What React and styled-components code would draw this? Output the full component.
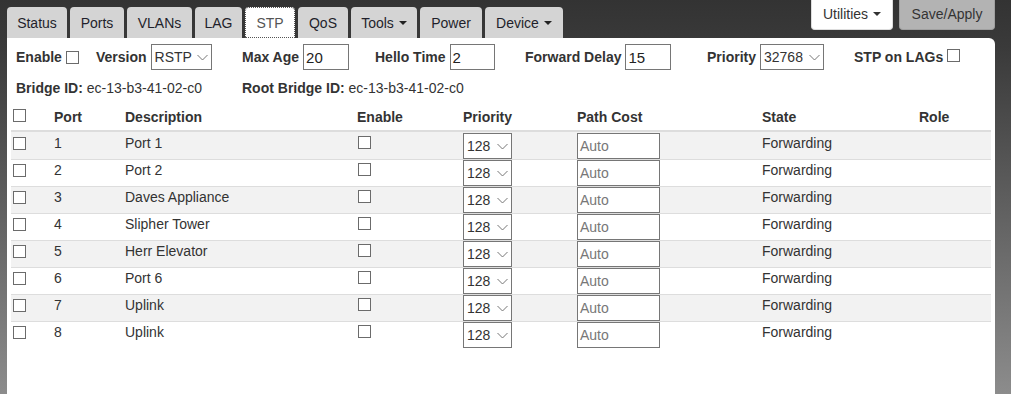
import React from "react";
import styled, { createGlobalStyle } from "styled-components";

const Global = createGlobalStyle`
  html, body { margin: 0; padding: 0; }
  body {
    min-height: 394px;
    background: linear-gradient(#333333 0%, #3a3a3a 12%, #8c8c8c 100%);
    font-family: "Liberation Sans", Arial, sans-serif;
    font-size: 14px;
    color: #333;
  }
`;

const Page = styled.div`
  display: flex;
  flex-direction: column;
  min-height: 394px;
  padding: 0 16px 0 7px;
  box-sizing: border-box;
`;

const TopBar = styled.div`
  display: flex;
  justify-content: space-between;
  align-items: flex-start;
  height: 38px;
`;

const Tabs = styled.div`
  display: flex;
  gap: 3px;
  margin-top: 7px;
`;

const Tab = styled.div`
  width: ${(p) => p.$w}px;
  height: 31px;
  box-sizing: border-box;
  display: flex;
  align-items: center;
  justify-content: center;
  gap: 5px;
  border-radius: 4px 4px 0 0;
  background: ${(p) => (p.$active ? "#fff" : "#d4d4d4")};
  color: ${(p) => (p.$active ? "#555" : "#1f1f2b")};
  outline: ${(p) => (p.$active ? "1px dotted #555" : "none")};
  outline-offset: -1px;
  line-height: 16px;
`;

const Caret = styled.span`
  display: inline-block;
  width: 0;
  height: 0;
  border-left: 4px solid transparent;
  border-right: 4px solid transparent;
  border-top: 4px solid ${(p) => p.$color || "#222"};
  margin-top: 1px;
`;

const Actions = styled.div`
  display: flex;
  gap: 6px;
`;

const ActionButton = styled.div`
  height: 30px;
  box-sizing: border-box;
  display: flex;
  align-items: center;
  justify-content: center;
  gap: 5px;
  width: ${(p) => p.$w}px;
  border-radius: 0 0 4px 4px;
  background: ${(p) => (p.$primary ? "#b3b3b3" : "#fff")};
  border: 1px solid ${(p) => (p.$primary ? "#a0a0a0" : "#ddd")};
  border-top: none;
  color: #333;
  font-size: 14px;
  padding-bottom: 2px;
`;

const Panel = styled.div`
  flex: 1;
  background: #fff;
  border-radius: 0 6px 0 0;
  padding: 6px 4px 0;
`;

const OptionsRow = styled.div`
  display: flex;
  align-items: center;
  height: 26px;
  padding-left: 5px;
`;

const Group = styled.div`
  display: flex;
  align-items: center;
  gap: 4px;
  width: ${(p) => (p.$w ? `${p.$w}px` : "auto")};
  flex: none;
`;

const Label = styled.span`
  font-weight: bold;
  line-height: 16px;
`;

const Check = styled.span`
  display: block;
  width: 13px;
  height: 13px;
  box-sizing: border-box;
  border: 1px solid #6b6b6b;
  background: #fff;
  flex: none;
  margin-top: ${(p) => p.$mt || 0}px;
  margin-left: ${(p) => p.$ml || 0}px;
`;

const SelectBox = styled.div`
  display: flex;
  align-items: center;
  justify-content: space-between;
  width: ${(p) => p.$w}px;
  height: 26px;
  box-sizing: border-box;
  border: 1px solid #767676;
  background: #fff;
  padding: 0 3px 0 3px;
  color: #333;
  font-size: 14px;
`;

const TextBox = styled.div`
  display: flex;
  align-items: center;
  width: ${(p) => p.$w}px;
  height: 26px;
  box-sizing: border-box;
  border: 1px solid #767676;
  background: #fff;
  padding: 0 2px;
  color: ${(p) => (p.$placeholder ? "#777" : "#222")};
  font-size: ${(p) => (p.$placeholder ? 14 : 15)}px;
`;

const InfoRow = styled.div`
  display: flex;
  margin-top: 10px;
  padding-left: 5px;
  line-height: 16px;
`;

const Info = styled.div`
  width: ${(p) => (p.$w ? `${p.$w}px` : "auto")};
`;

const Table = styled.table`
  width: 980px;
  margin-top: 9px;
  border-collapse: separate;
  border-spacing: 0;
  table-layout: fixed;
`;

const Th = styled.th`
  text-align: left;
  font-weight: bold;
  padding: 4px 0 5px;
  line-height: 16px;
  vertical-align: top;
  border-bottom: 2px solid #ddd;
  width: ${(p) => p.$w}px;
`;

const Tr = styled.tr`
  background: ${(p) => (p.$striped ? "#f2f2f2" : "#fff")};
`;

const Td = styled.td`
  box-sizing: border-box;
  height: 27px;
  padding: ${(p) => (p.$control ? "1px 0 0" : "3px 0 0")};
  line-height: 16px;
  vertical-align: top;

  tr + tr > & {
    border-top: 1px solid #ddd;
    padding-top: ${(p) => (p.$control ? 0 : 2)}px;
  }
`;

const Chevron = ({ color = "#777" }) => (
  <svg width="11" height="7" viewBox="0 0 11 7" fill="none">
    <path d="M0.5 1 L5.5 6 L10.5 1" stroke={color} strokeWidth="1" />
  </svg>
);

const Select = ({ value, w }) => (
  <SelectBox $w={w}>
    <span>{value}</span>
    <Chevron />
  </SelectBox>
);

const ports = [
  "Port 1",
  "Port 2",
  "Daves Appliance",
  "Slipher Tower",
  "Herr Elevator",
  "Port 6",
  "Uplink",
  "Uplink",
];

const columns = [
  { key: "sel", w: 43 },
  { key: "Port", w: 71 },
  { key: "Description", w: 232 },
  { key: "Enable", w: 106 },
  { key: "Priority", w: 114 },
  { key: "Path Cost", w: 185 },
  { key: "State", w: 157 },
  { key: "Role", w: 72 },
];

const tabs = [
  { label: "Status", w: 60 },
  { label: "Ports", w: 54 },
  { label: "VLANs", w: 65 },
  { label: "LAG", w: 47 },
  { label: "STP", w: 50, active: true },
  { label: "QoS", w: 50 },
  { label: "Tools", w: 66, caret: true },
  { label: "Power", w: 62 },
  { label: "Device", w: 78, caret: true },
];

export default function App() {
  return (
    <>
      <Global />
      <Page>
        <TopBar>
          <Tabs>
            {tabs.map((t) => (
              <Tab key={t.label} $w={t.w} $active={t.active}>
                {t.label}
                {t.caret && <Caret />}
              </Tab>
            ))}
          </Tabs>
          <Actions>
            <ActionButton $w={82}>
              Utilities <Caret $color="#333" />
            </ActionButton>
            <ActionButton $w={96} $primary>
              Save/Apply
            </ActionButton>
          </Actions>
        </TopBar>
        <Panel>
          <OptionsRow>
            <Group $w={80}>
              <Label>Enable</Label>
              <Check />
            </Group>
            <Group $w={146}>
              <Label>Version</Label>
              <Select value="RSTP" w={61} />
            </Group>
            <Group $w={133}>
              <Label>Max Age</Label>
              <TextBox $w={46}>20</TextBox>
            </Group>
            <Group $w={150}>
              <Label>Hello Time</Label>
              <TextBox $w={45}>2</TextBox>
            </Group>
            <Group $w={182}>
              <Label>Forward Delay</Label>
              <TextBox $w={46}>15</TextBox>
            </Group>
            <Group $w={147}>
              <Label>Priority</Label>
              <Select value="32768" w={64} />
            </Group>
            <Group>
              <Label>STP on LAGs</Label>
              <Check $mt={-3} />
            </Group>
          </OptionsRow>
          <InfoRow>
            <Info $w={226}>
              <Label>Bridge ID:</Label> ec-13-b3-41-02-c0
            </Info>
            <Info>
              <Label>Root Bridge ID:</Label> ec-13-b3-41-02-c0
            </Info>
          </InfoRow>
          <Table>
            <thead>
              <tr>
                {columns.map((c) => (
                  <Th key={c.key} $w={c.w}>
                    {c.key === "sel" ? <Check $ml={2} /> : c.key}
                  </Th>
                ))}
              </tr>
            </thead>
            <tbody>
              {ports.map((desc, i) => (
                <Tr key={i} $striped={i % 2 === 0}>
                  <Td>
                    <Check $ml={2} $mt={2} />
                  </Td>
                  <Td>{i + 1}</Td>
                  <Td>{desc}</Td>
                  <Td>
                    <Check $ml={1} $mt={1} />
                  </Td>
                  <Td $control>
                    <Select value="128" w={49} />
                  </Td>
                  <Td $control>
                    <TextBox $w={83} $placeholder>
                      Auto
                    </TextBox>
                  </Td>
                  <Td>Forwarding</Td>
                  <Td />
                </Tr>
              ))}
            </tbody>
          </Table>
        </Panel>
      </Page>
    </>
  );
}
